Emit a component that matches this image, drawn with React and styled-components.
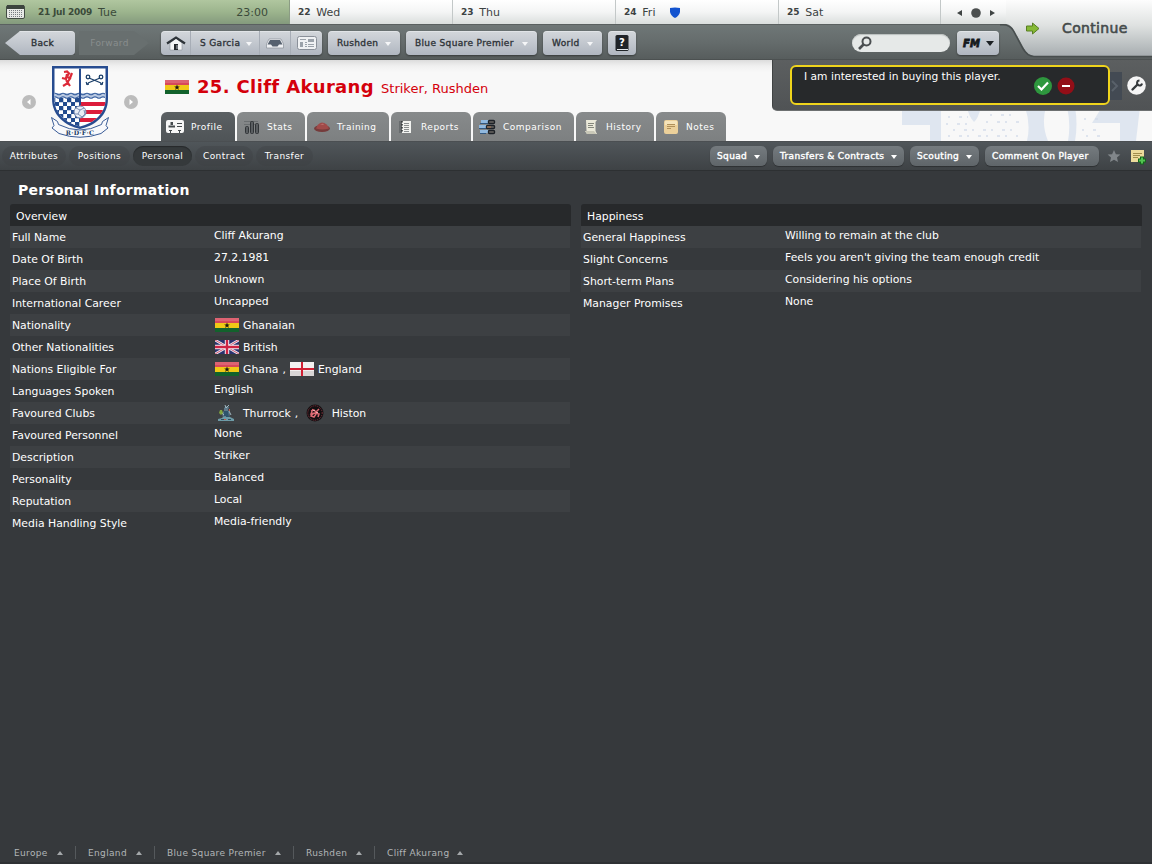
import React from 'react'
import styled, { createGlobalStyle, css } from 'styled-components'

const GlobalStyle = createGlobalStyle`
	* {
		box-sizing: border-box;
	}
	body {
		margin: 0;
		background: #36393c;
		font-family: "DejaVu Sans", sans-serif;
		font-size: 10.85px;
		color: #fff;
	}
	svg {
		display: block;
		flex: none;
	}
`

const Page = styled.div`
	position: relative;
	width: 1152px;
	height: 864px;
	display: flex;
	flex-direction: column;
	overflow: hidden;
	white-space: nowrap;
	background: #36393c;
`

const smallText = css`
	font-size: 9px;
	letter-spacing: 0.35px;
`

/* calendar strip */
const Calendar = styled.div`
	display: flex;
	height: 25px;
	background: linear-gradient(#ffffff, #f4f5f5 50%, #dadedd);
	border-bottom: 1px solid #5a6060;
	color: #3c4242;
	font-size: 11px;
`
const Today = styled.div`
	display: flex;
	align-items: center;
	width: 290px;
	padding: 0 21px 0 6px;
	border-right: 1px solid #8b9c84;
	background: linear-gradient(#b0c69f, #9cb48d 50%, #849a7d);
	color: #3b4a3a;
`
const Day = styled.div`
	display: flex;
	align-items: center;
	gap: 6px;
	width: ${props => props.$width || 163}px;
	padding: 0 0 0 8px;
	border-right: 1px solid #c3c8c8;
`
const DayNumber = styled.b`
	font-size: 9px;
	letter-spacing: ${props => props.$tight ? '-0.25px' : '-0.1px'};
`
const TodayText = styled.div`
	display: flex;
	align-items: center;
	flex: 1;
	gap: 6px;
	padding-left: 13px;
`
const Shield = styled.svg`
	margin-left: 9px;
`
const CalendarNav = styled.div`
	display: flex;
	align-items: center;
	padding: 1px 0 0 15px;
`

/* main navigation */
const NavBar = styled.div`
	display: flex;
	height: 35px;
	padding: 6px 0 0 5px;
	background: linear-gradient(#6f7777, #656c6c 50%, #575d5d);
	border-bottom: 1px solid #4c5151;
`
const silver = css`
	${smallText}
	background: linear-gradient(#d3d7db, #c3c8cf 48%, #b0b6c0);
	box-shadow: 0 1px 2px rgba(0,0,0,.4), inset 0 1px 0 rgba(255,255,255,.35);
	color: #2e3338;
	-webkit-text-stroke: 0.35px;
`
const BackForward = styled.div`
	${smallText}
	display: flex;
	gap: 4px;
	margin-right: 12px;
`
const Arrow = styled.div`
	display: flex;
	align-items: center;
	justify-content: center;
	width: 70px;
	height: 24px;
	${props => props.$back ? css`
		${silver}
		padding-left: 5px;
		border-radius: 0 4px 4px 0;
		clip-path: polygon(0 50%, 15px 0, 100% 0, 100% 100%, 15px 100%);
	` : css`
		padding-right: 9px;
		background: #686f6f;
		color: #888e8e;
		clip-path: polygon(0 0, 55px 0, 100% 50%, 55px 100%, 0 100%);
	`}
`
const NavButton = styled.div`
	${silver}
	display: flex;
	align-items: center;
	justify-content: space-between;
	width: ${props => props.$width}px;
	height: 24px;
	margin-right: 6px;
	padding: 0 9px;
	border-radius: 4px;
	${props => props.$center && 'justify-content: center; padding: 0;'}
`
const NavGroup = styled.div`
	${silver}
	display: flex;
	width: 161px;
	height: 24px;
	margin-right: 6px;
	border-radius: 4px;
`
const NavCell = styled.div`
	display: flex;
	align-items: center;
	justify-content: ${props => props.$spread ? 'space-between' : 'center'};
	width: ${props => props.$width}px;
	padding: ${props => props.$spread ? '0 7px 0 9px' : 0};
	border-right: 1px solid #a7adb6;
	&:last-child {
		border: none;
	}
`
const Caret = styled.i`
	width: 0;
	height: 0;
	margin-top: ${props => props.$up ? 0 : 2}px;
	border: 4px solid transparent;
	border-width: ${props => props.$up ? '0 3.5px 4px' : '4px 3.5px 0'};
	border-${props => props.$up ? 'bottom' : 'top'}-color: ${props => props.$color || '#f5f6f8'};
`
const SearchBox = styled.div`
	width: 98px;
	height: 18px;
	margin: 3px 7px 0 auto;
	padding: 1px 5px;
	border-radius: 9px;
	background: #e6e9e8;
	box-shadow: inset 0 1px 1px #b9bebd;
`
const FmMenu = styled(NavButton)`
	margin-right: 153px;
	padding: 0 5px 0 6px;
	i {
		border-width: 5px 4px 0;
		margin-top: 0;
	}
`
const FmText = styled.b`
	font-size: 10px;
	font-style: italic;
	letter-spacing: 0.2px;
	color: #15191d;
	-webkit-text-stroke: 0.8px;
`
const ContinueArea = styled.div`
	position: absolute;
	top: 0;
	right: 0;
	width: 152px;
	height: 62px;
`
const ContinueLabel = styled.div`
	position: absolute;
	left: 26px;
	top: 20px;
	display: flex;
	align-items: center;
	gap: 22px;
	font-size: 14px;
	letter-spacing: 0.35px;
	color: #454b4b;
	-webkit-text-stroke: 0.6px;
`

/* player header */
const Header = styled.div`
	display: flex;
	position: relative;
	height: 82px;
	background: linear-gradient(#dcdcdc, #f0f0f0 6px, #f8f8f8 12px);
	border-bottom: 1px solid #4b4f52;
`
const CrestArea = styled.div`
	display: flex;
	align-items: center;
	width: 161px;
	padding: 2px 0 0 22px;
`
const Crest = styled.svg`
	margin: 0 14px;
`
const Identity = styled.div`
	display: flex;
	flex-direction: column;
	justify-content: space-between;
`
const PlayerName = styled.div`
	display: flex;
	align-items: baseline;
	padding: 16px 0 0 4px;
	color: #d4000b;
	font-size: 13px;
	b {
		margin: 0 7px 0 8px;
		font-size: 18px;
		letter-spacing: 0.35px;
	}
	svg {
		align-self: center;
	}
`
const Tabs = styled.div`
	display: flex;
	gap: 2px;
`
const Tab = styled.div`
	${smallText}
	display: flex;
	align-items: center;
	width: ${props => props.$width}px;
	height: 29px;
	padding: 1px 0 0 5px;
	gap: ${props => props.$gap || 6}px;
	border-radius: 6px 6px 0 0;
	background: ${props => props.$active ? 'linear-gradient(#5b6063, #4f5457)' : 'linear-gradient(#878a8b, #7d8081)'};
	letter-spacing: 0.5px;
`
const Watermark = styled.svg`
	position: absolute;
	right: 0;
	bottom: 0;
`
const Notice = styled.div`
	position: absolute;
	top: 0;
	right: 0;
	display: flex;
	width: 380px;
	height: 51px;
	padding: 5px 0 0 18px;
	border-bottom-left-radius: 5px;
	background: linear-gradient(#5c5f60, #505355);
	border-left: 1px solid #404344;
	border-bottom: 1px solid #6d7071;
`
const NoticeBox = styled.div`
	display: flex;
	justify-content: space-between;
	width: 320px;
	height: 40px;
	margin-left: -1px;
	padding: 3px 33px 0 12px;
	border: 2px solid #efd41c;
	border-radius: 6px;
	background: #27292b;
	font-size: 10.7px;
`
const NoticeActions = styled.div`
	display: flex;
	gap: 5px;
	padding-top: 7px;
`
const NoticeSide = styled.div`
	display: flex;
	align-items: center;
	gap: 5px;
	padding-bottom: 4px;
`

/* section links and actions */
const SubNav = styled.div`
	${smallText}
	display: flex;
	align-items: center;
	height: 29px;
	padding: 0 5px 0 2px;
	background: linear-gradient(#50565a, #3e4245);
	border-bottom: 1px solid #2d3032;
	letter-spacing: 0.4px;
`
const Pill = styled.div`
	display: flex;
	align-items: center;
	justify-content: center;
	width: ${props => props.$width}px;
	height: 20px;
	margin-right: 3px;
	border-radius: 10px;
	background: ${props => props.$active ? '#35393b' : 'rgba(60,64,67,.35)'};
	box-shadow: ${props => props.$active ? 'inset 0 1px 1px #26292b' : 'none'};
`
const Actions = styled.div`
	display: flex;
	align-items: center;
	margin-left: auto;
`
const Action = styled.div`
	${smallText}
	display: flex;
	align-items: center;
	justify-content: space-between;
	width: ${props => props.$width}px;
	height: 20px;
	margin-right: 6px;
	padding: 0 7px;
	border-radius: 6px;
	background: linear-gradient(#757b7f, #5f6569);
	box-shadow: 0 1px 1px rgba(0,0,0,.3);
	-webkit-text-stroke: 0.4px;
`

/* content */
const Title = styled.h1`
	height: 33px;
	margin: 0;
	padding: 9px 0 0 18px;
	font-size: 14px;
	line-height: 20px;
	font-weight: bold;
	letter-spacing: 0.25px;
`
const Columns = styled.div`
	display: grid;
	grid-template-columns: 561px 561px;
	gap: 10px;
	padding-left: 10px;
	flex: 1;
	align-items: start;
`
const PanelTitle = styled.div`
	height: 22px;
	padding: 0 6px;
	line-height: 25px;
	border-radius: 3px 3px 0 0;
	background: #27292b;
`
const Row = styled.div`
	display: grid;
	grid-template-columns: 202px 1fr;
	height: 22px;
	margin-right: 1px;
	padding-left: 2px;
	line-height: 24px;
	&:nth-child(even) {
		background: #3d4043;
	}
`
const Value = styled.div`
	display: flex;
	align-items: center;
	align-self: start;
	line-height: 20px;
	${props => props.$icons && css`
		height: 22px;
		padding: 1px 0 0 1px;
		line-height: 22px;
	`}
	svg {
		margin: -1px 4px 0 0;
	}
`
const Comma = styled.span`
	margin: 0 4px;
`
const Footer = styled.div`
	${smallText}
	display: flex;
	height: 22px;
	padding-left: 14px;
	color: #b2b6b8;
	border-bottom: 2px solid #2e3134;
`
const Crumb = styled.div`
	display: flex;
	align-items: center;
	justify-content: space-between;
	width: ${props => props.$width}px;
	height: 13px;
	margin: 4px 12px 0 0;
	padding-right: 12px;
	border-right: 1px solid #55595c;
	&:last-child {
		border: none;
	}
`

const GhanaFlag = () => (
	<svg width="24" height="14" viewBox="0 0 24 14">
		<path fill="#d8485a" d="M0 0h24v5H0z" />
		<path fill="#f0c916" d="M0 5h24v5H0z" />
		<path fill="#12622c" d="M0 10h24v4H0z" />
		<path fill="#1b1a12" d="M12 4.6l.8 2h2l-1.6 1.2.6 2.1-1.8-1.3-1.8 1.3.6-2.1-1.6-1.2h2z" />
		<path fill="#fff" opacity=".15" d="M0 0h24v3H0z" />
	</svg>
)
const BritishFlag = () => (
	<svg width="24" height="14" viewBox="0 0 24 14">
		<path fill="#2a326e" d="M0 0h24v14H0z" />
		<path stroke="#e9e9f0" strokeWidth="2.6" d="M0 0l24 14M24 0L0 14" />
		<path stroke="#cf3550" strokeWidth=".8" d="M0 0l24 14M24 0L0 14" />
		<path stroke="#f2eef3" strokeWidth="4.4" d="M12 0v14M0 7h24" />
		<path stroke="#ce2444" strokeWidth="2.4" d="M12 0v14M0 7h24" />
	</svg>
)
const EnglandFlag = () => (
	<svg width="24" height="14" viewBox="0 0 24 14">
		<path fill="#f3f1f1" d="M0 0h24v14H0z" />
		<path fill="#d9d6d6" d="M0 9h24v5H0z" />
		<path stroke="#d21f33" strokeWidth="2" d="M12 0v14M0 7h24" />
	</svg>
)
const ThurrockBadge = () => (
	<svg width="24" height="18" viewBox="0 0 24 18">
		<path fill="#5e7888" d="M9 4l3-2 2 1-1 3 2 3-1 5H8L7 9l2-2z" />
		<path fill="#2d536c" d="M9 7h4l1 6H9z" />
		<path fill="none" stroke="#a9c3cc" strokeWidth=".9" d="M10 1l1 3 3-3M6 8l3 3M14 7l2 4M10 12v4" />
		<path fill="#82a43f" d="M5 6h2l1 3-2 2-2-2z" />
		<path fill="#6e9ba7" d="M3 15l4-1 1-1h7l4 2v2H3z" />
		<path fill="#2d4f60" d="M6 15h3v1H6zM13 15h3v1h-3z" />
		<path fill="#bf5a4c" d="M14 5h1v2h-1zM9 15h2v1H9z" />
	</svg>
)
const HistonBadge = () => (
	<svg width="22" height="18" viewBox="0 0 22 18">
		<circle cx="9" cy="9" r="8.5" fill="#120f11" />
		<circle cx="9" cy="9" r="7.2" fill="none" stroke="#8c3440" strokeDasharray="1 1" />
		<path fill="none" stroke="#dd6a73" strokeWidth="1.5" d="M5 7l3-1 2 2 3-3M7 5l-2 5 4-1 4 1-1 3M8 9l-3 3 3 1 2-3" />
		<path fill="#f3a9ad" d="M7 6h2v1H7zM10 8h2v1h-2z" />
	</svg>
)

const RoundArrow = ({ left }) => (
	<svg width="14" height="14" viewBox="0 0 14 14">
		<circle cx="7" cy="7" r="7" fill="#bcbcbc" />
		<path fill="#fff" d={left ? 'M8.5 4v6L5 7z' : 'M5.5 4v6L9 7z'} />
	</svg>
)

const ClubCrest = () => (
	<Crest width="60" height="74" viewBox="0 0 60 74">
		<defs>
			<clipPath id="shield"><path d="M4.500 3.500h51v31c0 14-12 24-25.500 27C16.500 58.500 4.500 48.500 4.500 34.500z" /></clipPath>
			<pattern id="checks" x="1" y="1" width="8" height="8" patternUnits="userSpaceOnUse">
				<path fill="#fff" d="M0 0h8v8H0z" />
				<path fill="#214a8d" d="M0 0h4.300v4.300H0zM4 4h4.300v4.300H4z" />
			</pattern>
		</defs>
		<path fill="#274c90" d="M2 1h56v33c0 17-14 27-28 30C16 61 2 51 2 34z" />
		<g clipPath="url(#shield)">
			<path fill="#fff" d="M0 0h60v66H0z" />
			<path fill="url(#checks)" d="M0 33h30v32H0z" />
			<path fill="#dc1c3b" d="M30 37h30v4H30zM30 45h30v4H30zM30 53h30v4H30z" />
			<path fill="#b9c9e2" d="M0 28h60v5H0z" />
			<path fill="none" stroke="#3c62a0" strokeWidth="1.1" d="M3 29q2-1.500 4 0t4 0 4 0 4 0 4 0 4 0 4 0 4 0 4 0 4 0 4 0 4 0 4 0M3 32.500q2-1.500 4 0t4 0 4 0 4 0 4 0 4 0 4 0 4 0 4 0 4 0 4 0 4 0 4 0" />
			<path stroke="#274c90" strokeWidth="2" d="M30 0v40" />
		</g>
		<path fill="none" stroke="#dc2a38" strokeWidth="2.200" d="M14 7l3-.5 2 2-2 3 3 2-2 3M17 9l-1 5-4-1M16 15l2 3-5 3M18 18l2 3M22 8l-2 5" />
		<g fill="none" stroke="#1b3f69" strokeWidth="1.300">
			<path d="M39 13l12 5M50 13l-12 5" />
			<circle cx="38" cy="12" r="1.800" /><circle cx="51" cy="12" r="1.800" />
			<path d="M36 17l2 3M53 17l-2 3M36 19h3M50 19h3" />
		</g>
		<circle cx="30" cy="47" r="6" fill="#e9edf5" stroke="#7487ad" />
		<path fill="none" stroke="#6d83ab" strokeWidth=".9" d="M26 43l4 2 4-2M30 45l-2 4-4 0M28 49l4 3 3-3-1-4M32 52v1" />
		<path fill="#f8f9fc" stroke="#3a5c97" strokeWidth="1" d="M1.500 52.500l6 4 1 3q21.500 11 43 0l1-3 6-4-2.500 8 2 2.500-7 5.500q-21 7.500-42 0l-7-5.500 2-2.500z" />
		<text x="30" y="70" textAnchor="middle" fontFamily="DejaVu Serif" fontWeight="bold" fontSize="6.200" letterSpacing=".3" fill="#17375f">R·D·F·C</text>
	</Crest>
)

const icons = {
	Profile: (
		<svg width="18" height="14" viewBox="0 0 18 14">
			<rect y="0" width="18" height="13" rx="2" fill="#f6f6f6" />
			<path fill="#444a4d" d="M4.500 2h2.500v3H4.500zM2.500 5.500H9v2H2.500zM11 3h5v1h-5zM11 6h5v1h-5zM4 10h1v3H4zM3 10h3v1H3zM13 10h1v3h-1zM12 10h3v1h-3z" />
		</svg>
	),
	Stats: (
		<svg width="18" height="18" viewBox="0 0 18 18">
			<path stroke="#6a6e70" d="M2 3.500h14M2 6.500h14" />
			<g fill="#5a5e61" stroke="#303437">
				<rect x="3.500" y="8.500" width="3" height="7" rx="1" />
				<rect x="8.500" y="3.500" width="3" height="12" rx="1" />
				<rect x="13.500" y="5.500" width="3" height="10" rx="1" />
			</g>
		</svg>
	),
	Training: (
		<svg width="20" height="12" viewBox="0 0 20 12">
			<ellipse cx="10" cy="7.500" rx="8" ry="3.500" fill="#753b3b" />
			<path fill="#a04a49" d="M4 7.500Q6 2 10 1.500q5 .5 7 6-7 2-13 0z" />
			<path fill="#b96a67" d="M8 4l3-1.500 1 1.500z" />
		</svg>
	),
	Reports: (
		<svg width="18" height="16" viewBox="0 0 18 16">
			<path fill="#686c6e" d="M3 2h4v12H3z" />
			<path fill="#f2f3f0" d="M6 2h9v12H6z" />
			<path stroke="#8b8f90" d="M8 4.500h5M8 6.500h5M8 8.500h5M8 10.500h5M8 12.500h5" />
			<path stroke="#2f3335" strokeWidth="1.500" strokeDasharray="1.500 1.500" d="M6 2v12" />
		</svg>
	),
	Comparison: (
		<svg width="18" height="16" viewBox="0 0 18 16">
			<path stroke="#91b9df" strokeWidth="3" d="M3 2.500h8M1 7.500h9M2 12.500h8" />
			<path stroke="#32577f" d="M2 4.500h8M1 9.500h9M2 14.500h6" />
			<g fill="#6a6763" stroke="#1d2228" strokeWidth="1.400">
				<rect x="10.500" y="1.500" width="6" height="3" rx="1" />
				<rect x="8.500" y="6.500" width="8" height="3" rx="1" />
				<rect x="10.500" y="11.500" width="6" height="3" rx="1" />
			</g>
			<path stroke="#b57a50" d="M9 8h4" />
		</svg>
	),
	History: (
		<svg width="18" height="16" viewBox="0 0 18 16">
			<path fill="#ebe9d9" d="M5 1h11l-1.500 2v9l1.500 3H6l-2-3h1.500z" />
			<path fill="#c9c8b8" d="M4 12h9l2.500 3H6z" />
			<path stroke="#85877c" d="M7 4.500h6M7 6.500h5M7 8.500h6" />
		</svg>
	),
	Notes: (
		<svg width="18" height="16" viewBox="0 0 18 16">
			<rect x="3" y="1" width="14" height="14" rx="2" fill="#ecd09a" />
			<path fill="#f6e4bb" d="M4 2h12v4H4z" />
			<path stroke="#b0905a" d="M6 5.500h8M6 7.500h8M6 9.500h4" />
		</svg>
	),
}

const days = [
	{ number: '22', name: 'Wed' },
	{ number: '23', name: 'Thu' },
	{ number: '24', name: 'Fri', match: true },
	{ number: '25', name: 'Sat', width: 162 },
]

const menus = [['Rushden', 72], ['Blue Square Premier', 131], ['World', 59]]

const tabs = [
	['Profile', 74, 7], ['Stats', 68, 7], ['Training', 82, 5], ['Reports', 80, 7],
	['Comparison', 101, 7], ['History', 78, 7], ['Notes', 70, 7],
]

const sections = [['Attributes', 64], ['Positions', 61], ['Personal', 59], ['Contract', 58], ['Transfer', 57]]

const actions = [['Squad', 57, true], ['Transfers & Contracts', 131, true], ['Scouting', 69, true], ['Comment On Player', 114, false]]

const crumbs = [['Europe', 62], ['England', 67], ['Blue Square Premier', 127], ['Rushden', 69], ['Cliff Akurang', 88]]

const overview = [
	['Full Name', 'Cliff Akurang'],
	['Date Of Birth', '27.2.1981'],
	['Place Of Birth', 'Unknown'],
	['International Career', 'Uncapped'],
	['Nationality', <><GhanaFlag />Ghanaian</>],
	['Other Nationalities', <><BritishFlag />British</>],
	['Nations Eligible For', <><GhanaFlag />Ghana<Comma>,</Comma><EnglandFlag />England</>],
	['Languages Spoken', 'English'],
	['Favoured Clubs', <><ThurrockBadge />Thurrock<Comma>,</Comma>&nbsp;<HistonBadge />Histon</>],
	['Favoured Personnel', 'None'],
	['Description', 'Striker'],
	['Personality', 'Balanced'],
	['Reputation', 'Local'],
	['Media Handling Style', 'Media-friendly'],
]

const happiness = [
	['General Happiness', 'Willing to remain at the club'],
	['Slight Concerns', "Feels you aren't giving the team enough credit"],
	['Short-term Plans', 'Considering his options'],
	['Manager Promises', 'None'],
]

const Panel = ({ title, rows }) => (
	<div>
		<PanelTitle>{title}</PanelTitle>
		{rows.map(([label, value]) => (
			<Row key={label}>
				<span>{label}</span>
				<Value $icons={typeof value !== 'string'}>{value}</Value>
			</Row>
		))}
	</div>
)

const CalendarStrip = () => (
	<Calendar>
		<Today>
			<svg width="19" height="14" viewBox="0 0 19 14">
				<rect x=".5" y=".5" width="18" height="13" rx="1.5" fill="#e7e9e6" stroke="#424c43" />
				<path fill="#3c443e" d="M1 0h17v4H1z" />
				<path stroke="#777d80" strokeDasharray="1 1" d="M3 5.5h14M3 7.5h14M3 9.5h14M3 11.5h14" />
			</svg>
			<TodayText><DayNumber $tight>21 Jul 2009</DayNumber>Tue</TodayText>
			23:00
		</Today>
		{days.map(day => (
			<Day key={day.number} $width={day.width}>
				<DayNumber>{day.number}</DayNumber>{day.name}
				{day.match && (
					<Shield width="10" height="11" viewBox="0 0 10 11">
						<path fill="#1353cf" d="M0 1q5-1 10 0v4q-1 4-5 6-4-2-5-6z" />
					</Shield>
				)}
			</Day>
		))}
		<CalendarNav>
			<svg width="40" height="12" viewBox="0 0 40 12">
				<path fill="#3f4444" d="M6 3v6L1 6zM34 3v6l5-3z" />
				<circle cx="20" cy="6" r="4.8" fill="#4b4f4f" />
			</svg>
		</CalendarNav>
	</Calendar>
)

const Navigation = () => (
	<NavBar>
		<BackForward>
			<Arrow $back>Back</Arrow>
			<Arrow>Forward</Arrow>
		</BackForward>
		<NavGroup>
			<NavCell $width={30}>
				<svg width="20" height="16" viewBox="0 0 20 16">
					<path fill="#f5f6f7" stroke="#8c9299" strokeWidth=".6" d="M4 8l6-5 6 5v7H4z" />
					<path fill="none" stroke="#2e3439" strokeWidth="2.2" d="M1 8.5l9-6 9 6" />
					<path fill="#25292d" d="M8 9h4v6H8z" />
					<path fill="#b9bec5" d="M10.5 10h1v4h-1z" />
				</svg>
			</NavCell>
			<NavCell $width={69} $spread>S Garcia<Caret /></NavCell>
			<NavCell $width={31}>
				<svg width="18" height="14" viewBox="0 0 18 14">
					<path fill="#eef0f3" stroke="#8a9099" strokeWidth=".7" d="M3 3h12l2.5 5v4H.5V8z" />
					<path fill="#56616f" d="M4 4h10l2.500 4.500H13l-1.500 2h-5L5 8.500H1.500z" />
				</svg>
			</NavCell>
			<NavCell $width={31}>
				<svg width="20" height="16" viewBox="0 0 20 16">
					<rect x=".5" y="1.5" width="19" height="13" rx="2" fill="#eff1f3" stroke="#8a9099" />
					<path fill="#9ba2aa" d="M3 4h6v1H3zM3 7h3v5H3zM11 4h6v3h-6zM8 7h2v1H8zM8 9h2v1H8zM8 11h2v1H8zM11 9h6v1h-6zM11 11h6v1h-6z" />
				</svg>
			</NavCell>
		</NavGroup>
		{menus.map(([label, width]) => (
			<NavButton key={label} $width={width}>{label}<Caret /></NavButton>
		))}
		<NavButton $width={28} $center>
			<svg width="14" height="16" viewBox="0 0 14 16">
				<rect width="13" height="16" x=".5" rx="1.5" fill="#202428" />
				<path stroke="#e5e8eb" d="M2 14.5h11" />
				<text x="7" y="10.5" textAnchor="middle" fontFamily="DejaVu Sans" fontWeight="bold" fontSize="10" fill="#fff">?</text>
			</svg>
		</NavButton>
		<SearchBox>
			<svg width="16" height="16" viewBox="0 0 16 16">
				<g fill="none" stroke="#4a4e50" strokeWidth="2">
					<circle cx="9.5" cy="6.5" r="4" />
					<path strokeWidth="2.6" d="M6.5 9.5L2 14" />
				</g>
			</svg>
		</SearchBox>
		<FmMenu $width={42}><FmText>FM</FmText><Caret $color="#1c2024" /></FmMenu>
	</NavBar>
)

const Continue = () => (
	<ContinueArea>
		<svg width="152" height="62" viewBox="0 0 152 62">
			<defs>
				<linearGradient id="cont" x1="0" x2="0" y1="0" y2="1">
					<stop offset="0" stopColor="#fdfdfd" />
					<stop offset=".45" stopColor="#dfe2e1" />
					<stop offset="1" stopColor="#a7adb0" />
				</linearGradient>
			</defs>
			<path fill="url(#cont)" d="M6 0h146v56H33q-5 0-9-7.500L14.500 31Q11.500 25 6 24z" />
			<path fill="none" stroke="#484e4e" strokeWidth="1.5" d="M0 24.700h3q7 0 10.500 6.300l9 17q5 8.500 11.500 8.500h118" />
		</svg>
		<ContinueLabel>
			<svg width="14" height="13" viewBox="0 0 14 13">
				<path fill="#85b935" stroke="#587e23" d="M.5 4h6V1l6.500 5.500L6.500 12V9h-6z" />
			</svg>
			Continue
		</ContinueLabel>
	</ContinueArea>
)

const PlayerHeader = () => (
	<Header>
		<Watermark width="302" height="34" viewBox="0 0 302 34">
			<path fill="#dfe6f0" d="M52 2h39v32H80V18H52zM175 0h21q-5 17 2 34h-21q4-17-2-34zM217 0h8q3 17 0 34h-7q3-17-1-34zM252 0h38l-4 34h-16V16h-28zM117 0h14q-3 12-7 15-5-5-7-15z" />
			<path stroke="#d5ddea" strokeWidth="1.5" strokeDasharray="2 9 3 5" d="M98 10h20M140 8h28M96 17h26M136 15h34M103 23h62M98 29h70M234 12h14M232 23h18M236 29h15" />
		</Watermark>
		<CrestArea>
			<RoundArrow left />
			<ClubCrest />
			<RoundArrow />
		</CrestArea>
		<Identity>
			<PlayerName><GhanaFlag /><b>25. Cliff Akurang</b>Striker, Rushden</PlayerName>
			<Tabs>
				{tabs.map(([label, width, gap], i) => (
					<Tab key={label} $width={width} $gap={gap} $active={i === 0}>{icons[label]}{label}</Tab>
				))}
			</Tabs>
		</Identity>
		<Notice>
			<NoticeBox>
				I am interested in buying this player.
				<NoticeActions>
					<svg width="18" height="18" viewBox="0 0 18 18">
						<circle cx="9" cy="9" r="9" fill="#2e973e" />
						<path fill="none" stroke="#fff" strokeWidth="2.2" d="M4 9l3.500 3.500L14 5.500" />
					</svg>
					<svg width="18" height="18" viewBox="0 0 18 18">
						<circle cx="9" cy="9" r="8.500" fill="#930e17" />
						<path stroke="#fff" strokeWidth="2" d="M5 9h8" />
					</svg>
				</NoticeActions>
			</NoticeBox>
			<NoticeSide>
				<svg width="12" height="28" viewBox="0 0 12 28">
					<path fill="#434a53" d="M0 0h12v28H0z" />
					<path fill="none" stroke="#59616a" strokeWidth="2" d="M2 9l5 5-5 5" />
				</svg>
				<svg width="19" height="19" viewBox="0 0 19 19">
					<circle cx="9.500" cy="9.500" r="9.300" fill="#f5f5f5" />
					<path fill="none" stroke="#34383b" strokeWidth="2.400" strokeLinecap="round" d="M5.500 13.500l5-5" />
					<path fill="none" stroke="#34383b" strokeWidth="2" d="M12.500 4.500a2.500 2.500 0 1 0 2.500 3" />
				</svg>
			</NoticeSide>
		</Notice>
	</Header>
)

const SectionBar = () => (
	<SubNav>
		{sections.map(([label, width]) => (
			<Pill key={label} $width={width} $active={label === 'Personal'}>{label}</Pill>
		))}
		<Actions>
			{actions.map(([label, width, menu]) => (
				<Action key={label} $width={width}>{label}{menu && <Caret $color="#fff" />}</Action>
			))}
			<svg width="42" height="18" viewBox="0 0 42 18">
				<path fill="#81868a" d="M9 3l1.900 4.200 4.500.4-3.400 3 1 4.400L9 12.700 5 15l1-4.400-3.400-3 4.500-.4z" />
				<path fill="#eddb9c" d="M26 3h13v12H26z" />
				<path stroke="#a18c4c" d="M28 6.500h9M28 8.500h7M28 10.500h5" />
				<path stroke="#14651c" strokeWidth="4" d="M37 9.500v8M33 13.500h8" />
				<path stroke="#53c451" strokeWidth="2" d="M37 10.500v6M34 13.500h6" />
			</svg>
		</Actions>
	</SubNav>
)

export default function App() {
	return (
		<Page>
			<GlobalStyle />
			<CalendarStrip />
			<Navigation />
			<PlayerHeader />
			<SectionBar />
			<Title>Personal Information</Title>
			<Columns>
				<Panel title="Overview" rows={overview} />
				<Panel title="Happiness" rows={happiness} />
			</Columns>
			<Footer>
				{crumbs.map(([label, width]) => (
					<Crumb key={label} $width={width}>{label}<Caret $up $color="#a4a8aa" /></Crumb>
				))}
			</Footer>
			<Continue />
		</Page>
	)
}
